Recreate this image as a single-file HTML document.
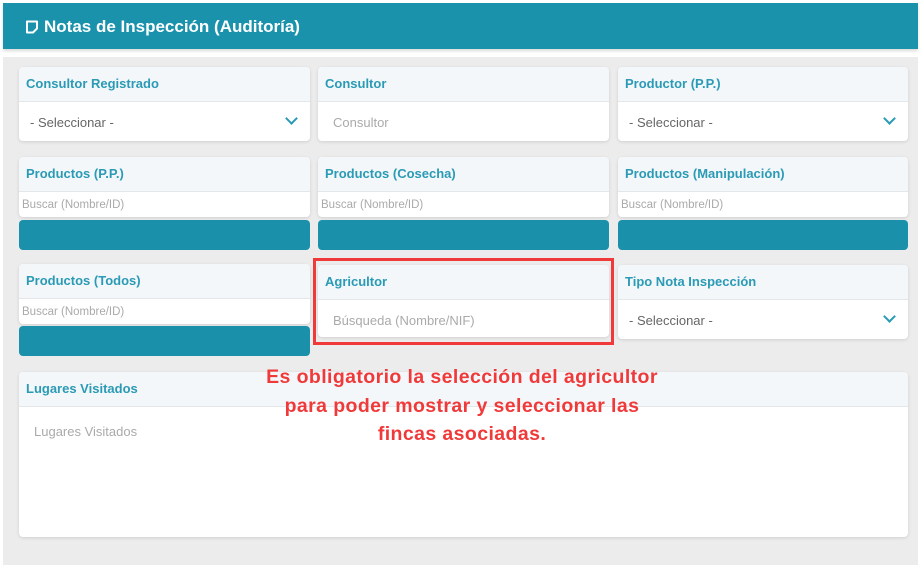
<!DOCTYPE html>
<html><head><meta charset="utf-8"><style>
*{box-sizing:border-box;margin:0;padding:0}
body{width:920px;height:565px;background:#fff;font-family:"Liberation Sans",sans-serif;position:relative;overflow:hidden}
.hdr{position:absolute;left:3px;top:3px;width:915px;height:46px;background:#1a92ac;color:#fff;font-size:17px;font-weight:bold;padding:14px 0 0 22px;box-shadow:0 2px 3px rgba(0,0,0,.15)}
.hdr svg{vertical-align:-2px;margin-right:5px}
.body{position:absolute;left:3px;top:57px;width:915px;height:508px;background:#ececec}
.card{position:absolute;background:#fff;border-radius:4px;box-shadow:0 1px 3px rgba(0,0,0,.12);overflow:hidden}
.ch{height:35px;background:#f3f7fa;color:#2a9ab5;font-weight:bold;font-size:13px;padding:9px 0 0 7px;border-bottom:1px solid #e3e7ea}
.ci{font-size:13px;color:#666;padding:13px 0 0 11px;position:relative;height:38px}
.ci.ph{color:#aaa;padding-left:15px}
.sr{font-size:11.5px;color:#aaa;padding:7px 0 0 3px;height:24px}
.bar{position:absolute;height:30px;background:#1a90aa;border-radius:4px}
.chev{position:absolute;right:14px;top:12px;width:9px;height:9px;border-right:2px solid #2a9ab5;border-bottom:2px solid #2a9ab5;transform:rotate(45deg)}
.red{position:absolute;left:313px;top:258px;width:301px;height:87px;border:3px solid #f03a3a}
.msg{position:absolute;left:220px;top:363px;width:484px;text-align:center;color:#f03a3a;font-weight:bold;font-size:19.5px;letter-spacing:0.4px;line-height:28.5px}
</style></head><body>
<div class="hdr"><svg width="14" height="14" viewBox="0 0 14 14"><path d="M2 1.5h10v7l-4 4H2z" fill="none" stroke="#fff" stroke-width="2" stroke-linejoin="round"/></svg>Notas de Inspección (Auditoría)</div>
<div class="body"></div>

<div class="card" style="left:19px;top:67px;width:291px;height:74px"><div class="ch">Consultor Registrado</div><div class="ci">- Seleccionar -<span class="chev"></span></div></div>
<div class="card" style="left:318px;top:67px;width:291px;height:74px"><div class="ch">Consultor</div><div class="ci ph">Consultor</div></div>
<div class="card" style="left:618px;top:67px;width:290px;height:74px"><div class="ch">Productor (P.P.)</div><div class="ci">- Seleccionar -<span class="chev"></span></div></div>

<div class="card" style="left:19px;top:157px;width:291px;height:60px"><div class="ch">Productos (P.P.)</div><div class="sr">Buscar (Nombre/ID)</div></div>
<div class="bar" style="left:19px;top:220px;width:291px"></div>
<div class="card" style="left:318px;top:157px;width:291px;height:60px"><div class="ch">Productos (Cosecha)</div><div class="sr">Buscar (Nombre/ID)</div></div>
<div class="bar" style="left:318px;top:220px;width:291px"></div>
<div class="card" style="left:618px;top:157px;width:290px;height:60px"><div class="ch">Productos (Manipulación)</div><div class="sr">Buscar (Nombre/ID)</div></div>
<div class="bar" style="left:618px;top:220px;width:290px"></div>

<div class="card" style="left:19px;top:264px;width:291px;height:60px"><div class="ch">Productos (Todos)</div><div class="sr">Buscar (Nombre/ID)</div></div>
<div class="bar" style="left:19px;top:326px;width:291px"></div>
<div class="card" style="left:318px;top:265px;width:291px;height:72px"><div class="ch">Agricultor</div><div class="ci ph">Búsqueda (Nombre/NIF)</div></div>
<div class="card" style="left:618px;top:265px;width:290px;height:74px"><div class="ch">Tipo Nota Inspección</div><div class="ci">- Seleccionar -<span class="chev"></span></div></div>

<div class="card" style="left:19px;top:372px;width:889px;height:165px"><div class="ch">Lugares Visitados</div><div class="ci ph" style="padding-top:17px">Lugares Visitados</div></div>

<div class="red"></div>
<div class="msg">Es obligatorio la selección del agricultor<br>para poder mostrar y seleccionar las<br>fincas asociadas.</div>
</body></html>
